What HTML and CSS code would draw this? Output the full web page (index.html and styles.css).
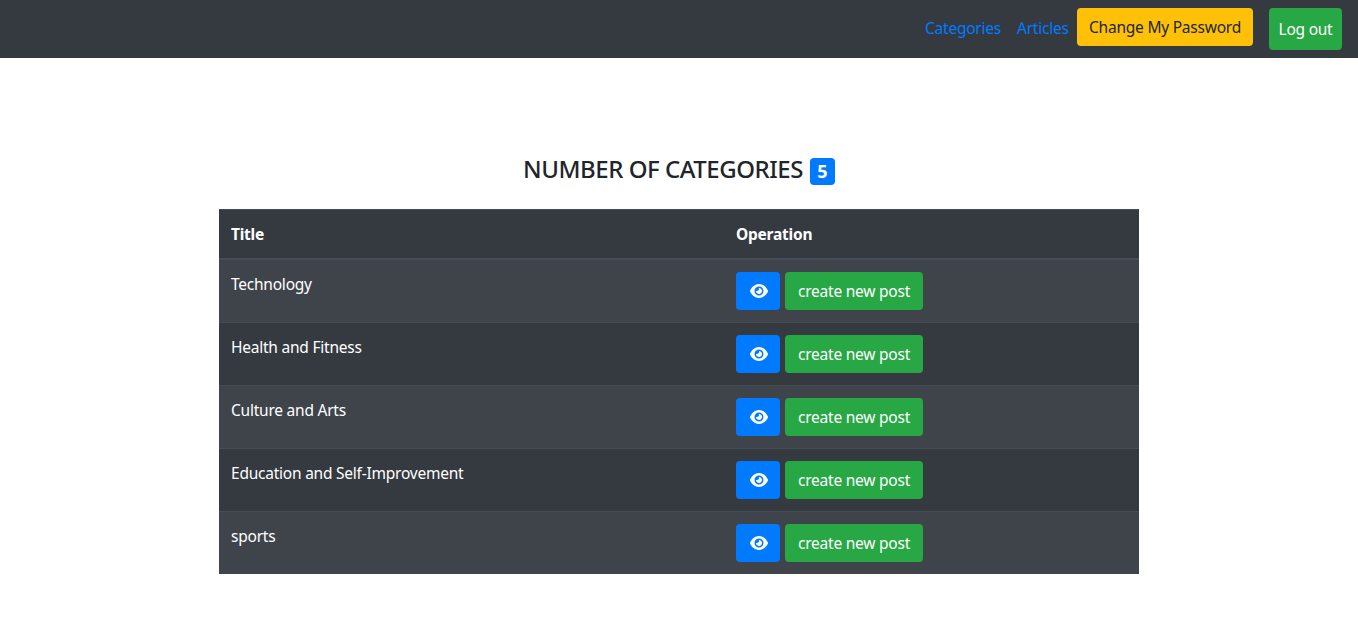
FILE: index.html
```
<!DOCTYPE html>
<html lang="en">
<head>
<meta charset="utf-8">
<title>Categories</title>
<link rel="stylesheet" href="styles.css">
</head>
<body>
<svg class="sprite" aria-hidden="true"><symbol id="eye" viewBox="0 0 576 512"><path fill="currentColor" d="M288 32c-80.8 0-145.5 36.8-192.6 80.6C48.6 156 17.3 208 2.5 243.7c-3.3 7.9-3.3 16.7 0 24.6C17.3 304 48.6 356 95.4 399.4C142.5 443.2 207.2 480 288 480s145.5-36.8 192.6-80.6c46.8-43.5 78.1-95.4 93-131.1c3.3-7.9 3.3-16.7 0-24.6c-14.9-35.7-46.2-87.7-93-131.1C433.5 68.8 368.8 32 288 32zM144 256a144 144 0 1 1 288 0 144 144 0 1 1 -288 0zm144-64c0 35.3-28.7 64-64 64c-7.1 0-13.9-1.2-20.3-3.3c-5.5-1.8-11.9 1.6-11.7 7.4c.3 6.9 1.3 13.8 3.2 20.7c13.7 51.2 66.4 81.6 117.6 67.9s81.6-66.4 67.9-117.6c-11.1-41.5-47.8-69.4-88.6-71.1c-5.8-.2-9.2 6.1-7.4 11.7c2.1 6.4 3.3 13.2 3.3 20.3z"/></symbol></svg>
<nav class="navbar">
  <a class="nav-link categories" href="#">Categories</a>
  <a class="nav-link articles" href="#">Articles</a>
  <a class="btn btn-warning" href="#">Change My Password</a>
  <a class="btn btn-success logout" href="#">Log out</a>
</nav>
<main class="container">
  <h4 class="heading"><span class="heading-text">NUMBER OF CATEGORIES</span><span class="badge">5</span></h4>
  <table class="table">
    <thead><tr><th class="col-title">Title</th><th>Operation</th></tr></thead>
    <tbody>
      <tr><td>Technology</td><td><div class="actions"><a class="btn btn-primary" href="#"><svg class="icon"><use href="#eye"/></svg></a><a class="btn btn-success create" href="#">create new post</a></div></td></tr>
      <tr><td>Health and Fitness</td><td><div class="actions"><a class="btn btn-primary" href="#"><svg class="icon"><use href="#eye"/></svg></a><a class="btn btn-success create" href="#">create new post</a></div></td></tr>
      <tr><td>Culture and Arts</td><td><div class="actions"><a class="btn btn-primary" href="#"><svg class="icon"><use href="#eye"/></svg></a><a class="btn btn-success create" href="#">create new post</a></div></td></tr>
      <tr><td>Education and Self-Improvement</td><td><div class="actions"><a class="btn btn-primary" href="#"><svg class="icon"><use href="#eye"/></svg></a><a class="btn btn-success create" href="#">create new post</a></div></td></tr>
      <tr><td>sports</td><td><div class="actions"><a class="btn btn-primary" href="#"><svg class="icon"><use href="#eye"/></svg></a><a class="btn btn-success create" href="#">create new post</a></div></td></tr>
    </tbody>
  </table>
</main>
</body>
</html>
```
FILE: styles.css
```
* { box-sizing: border-box; }
body { margin: 0; background: #fff; color: #212529; font: 400 15.5px/24px "Segoe UI", "Noto Sans", sans-serif; letter-spacing: -0.23px; }
a { text-decoration: none; white-space: nowrap; }
.sprite { display: none; }
.navbar { display: flex; justify-content: flex-end; align-items: flex-start; height: 58px; padding: 8px 16px; background: #343a40; }
.nav-link { padding: 8px; color: #007bff; }
.categories { width: 92px; }
.articles { width: 68px; }
.btn { display: flex; align-items: center; justify-content: center; height: 38px; border-radius: 4px; color: #fff; }
.btn-warning { width: 176px; margin-right: 16px; background: #ffc107; color: #212529; }
.btn-success { background: #28a745; }
.btn-primary { width: 44px; background: #007bff; }
.logout { width: 73px; height: 42px; }
.create { width: 138px; }
.container { width: 920px; margin: 97px auto 0; }
.heading { display: flex; justify-content: center; align-items: flex-start; gap: 7px; margin: 0; height: 54px; font-size: 24px; font-weight: 500; line-height: 27px; }
.heading-text { letter-spacing: -0.47px; white-space: nowrap; }
.badge { width: 25px; height: 27px; margin-top: 3px; border-radius: 4px; background: #007bff; color: #fff; font-size: 18px; font-weight: 700; line-height: 27px; text-align: center; letter-spacing: 0; }
.table { width: 100%; table-layout: fixed; border-collapse: collapse; background: #343a40; color: #fff; }
.table th, .table td { padding: 12px; border-top: 1px solid #454d55; vertical-align: top; text-align: left; }
.table th { border-bottom: 2px solid #454d55; font-weight: 700; }
.table .col-title { width: 505px; }
.table tbody tr:nth-child(odd) { background: #3f444b; }
.actions { display: flex; gap: 5px; }
.icon { width: 18px; height: 16px; margin-left: 1px; }
```
